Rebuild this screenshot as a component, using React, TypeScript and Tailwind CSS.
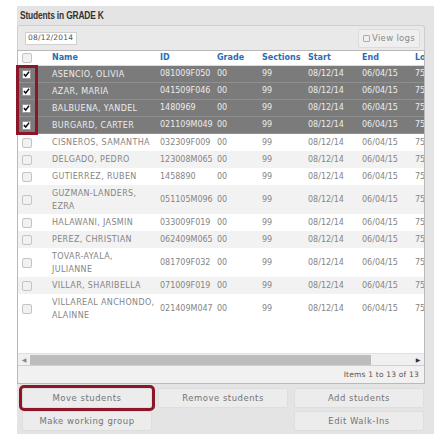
import React from "react";

type Student = {
  name: string[];
  id: string;
  selected?: boolean;
};

const students: Student[] = [
  { name: ["ASENCIO, OLIVIA"], id: "081009F050", selected: true },
  { name: ["AZAR, MARIA"], id: "041509F046", selected: true },
  { name: ["BALBUENA, YANDEL"], id: "1480969", selected: true },
  { name: ["BURGARD, CARTER"], id: "021109M049", selected: true },
  { name: ["CISNEROS, SAMANTHA"], id: "032309F009" },
  { name: ["DELGADO, PEDRO"], id: "123008M065" },
  { name: ["GUTIERREZ, RUBEN"], id: "1458890" },
  { name: ["GUZMAN-LANDERS,", "EZRA"], id: "051105M096" },
  { name: ["HALAWANI, JASMIN"], id: "033009F019" },
  { name: ["PEREZ, CHRISTIAN"], id: "062409M065" },
  { name: ["TOVAR-AYALA,", "JULIANNE"], id: "081709F032" },
  { name: ["VILLAR, SHARIBELLA"], id: "071009F019" },
  { name: ["VILLAREAL ANCHONDO,", "ALAINNE"], id: "021409M047" },
];

const font = { fontFamily: '"DejaVu Sans", Verdana, sans-serif' };

function Check({ checked }: { checked?: boolean }) {
  if (checked) {
    return (
      <div className="w-[9px] h-[9px] bg-white border border-[#9a9a9a] flex items-center justify-center">
        <svg width="8" height="8" viewBox="0 0 8 8">
          <path d="M1 4.2 L3.1 6.3 L7 1.3" stroke="#111" strokeWidth="1.8" fill="none" />
        </svg>
      </div>
    );
  }
  return <div className="w-[10px] h-[10px] rounded-[2px] bg-[#f1f1f1] border border-[#c4c4c4]" />;
}

function Row({ s, index }: { s: Student; index: number }) {
  const tall = s.name.length > 1;
  const stripe = !s.selected && (index - 4) % 2 === 1;
  const bg = s.selected
    ? "bg-[#7b7b7b] text-[#ececec] border-b border-[#8f8f8f]"
    : stripe
    ? "bg-[#f2f2f2] text-[#858585]"
    : "bg-white text-[#858585]";
  return (
    <div className={`flex items-center text-[8px] ${tall ? "h-[29px]" : "h-[17px]"} ${bg}`}>
      <div className="w-[34px] shrink-0 pl-[4px] flex items-center">
        <Check checked={s.selected} />
      </div>
      <div className="w-[108px] shrink-0 leading-[13px] whitespace-nowrap tracking-[0.35px]">
        {s.name.map((l) => (
          <div key={l}>{l}</div>
        ))}
      </div>
      <div className="w-[57px] shrink-0 whitespace-nowrap">{s.id}</div>
      <div className="w-[45px] shrink-0">00</div>
      <div className="w-[46px] shrink-0">99</div>
      <div className="w-[54px] shrink-0">08/12/14</div>
      <div className="w-[53px] shrink-0">06/04/15</div>
      <div className="w-[20px] shrink-0">75</div>
    </div>
  );
}

function Btn({ label, highlight }: { label: string; highlight?: boolean }) {
  return (
    <div
      className={`w-[130px] h-[20px] rounded-[2px] bg-[#ececec] border border-[#dedede] flex items-center justify-center text-[8.5px] tracking-[0.5px] text-[#747474] ${
        highlight ? "outline-[3px] outline outline-offset-0 outline-[#8a1628]" : ""
      }`}
    >
      {label}
    </div>
  );
}

export default function App() {
  return (
    <div className="w-[434px] h-[434px] bg-white overflow-hidden" style={font}>
      <div className="ml-[17px] mt-[6px] w-[417px] h-[428px] bg-[#e4e4e4] flex flex-col">
        <div className="h-[19px] pl-[3px] flex items-center">
          <span
            className="text-[10.5px] tracking-[-0.2px] font-bold text-[#333] scale-x-[0.8] origin-left inline-block whitespace-nowrap"
            style={{ fontFamily: '"Liberation Sans", Arial, sans-serif' }}
          >
            Students in GRADE K
          </span>
        </div>
        <div className="w-[408px] h-[25px] rounded-t-[3px] border border-b-0 border-[#cfcfcf] bg-[#e9e9e9] flex items-center justify-between pl-[7px] pr-[4px]">
          <div className="h-[13px] w-[52px] bg-white border border-[#d0d0d0] flex items-center pl-[2px] text-[7.5px] tracking-[0.2px] text-[#555]">
            08/12/2014
          </div>
          <div className="h-[19px] w-[62px] rounded-[2px] bg-[#efefef] border border-[#dcdcdc] flex items-center justify-center gap-[2px] text-[8.5px] tracking-[0.3px] text-[#8a8a8a]">
            <div className="w-[7px] h-[7px] border border-[#aaa] rounded-[1px]" />
            View logs
          </div>
        </div>
        <div className="relative w-[408px] border border-[#b9b9b9] bg-white">
          <div className="overflow-hidden text-[8px] w-full">
            <div className="flex items-center h-[15px] bg-white text-[#2b6db3] font-bold border-b border-[#dcdcdc]">
              <div className="w-[34px] shrink-0 pl-[4px] flex items-center">
                <Check />
              </div>
              <div className="w-[108px] shrink-0">Name</div>
              <div className="w-[57px] shrink-0">ID</div>
              <div className="w-[45px] shrink-0">Grade</div>
              <div className="w-[46px] shrink-0">Sections</div>
              <div className="w-[54px] shrink-0">Start</div>
              <div className="w-[53px] shrink-0">End</div>
              <div className="w-[20px] shrink-0">Lo</div>
            </div>
            {students.map((s, i) => (
              <Row key={s.name.join(" ")} s={s} index={i} />
            ))}
            <div className="h-[30px] bg-white" />
            <div className="h-[12px] bg-[#f0f0f0] flex items-center border-t border-[#e0e0e0]">
              <div className="w-[12px] flex items-center justify-center text-[6px] text-[#888]">◀</div>
              <div className="w-[341px] h-[10px] bg-[#bdbdbd]" />
              <div className="flex-1" />
              <div className="w-[12px] flex items-center justify-center text-[6px] text-[#333]">▶</div>
            </div>
            <div className="h-[18px] bg-[#f1f1f1] border-t border-[#d0d0d0] flex items-center justify-end pr-[5px] text-[7.5px] tracking-[0.2px] text-[#555]">
              Items 1 to 13 of 13
            </div>
          </div>
          <div className="absolute left-[-2px] top-[14px] w-[22px] h-[70px] border-[3px] border-[#8a1628]" />
        </div>
        <div className="mt-[4px] pl-[5px] flex flex-col gap-[3px]">
          <div className="flex gap-[6px]">
            <Btn label="Move students" highlight />
            <Btn label="Remove students" />
            <Btn label="Add students" />
          </div>
          <div className="flex gap-[6px]">
            <Btn label="Make working group" />
            <div className="w-[130px]" />
            <Btn label="Edit Walk-Ins" />
          </div>
        </div>
      </div>
    </div>
  );
}
